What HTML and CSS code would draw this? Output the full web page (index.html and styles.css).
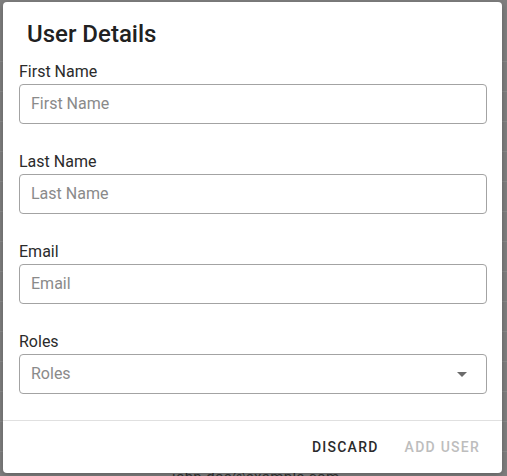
FILE: index.html
```html
<!DOCTYPE html>
<html>
<head>
<meta charset="utf-8">
<link rel="stylesheet" href="styles.css">
</head>
<body>
<div class="page">
  <div class="rows">
    <div class="row"></div><div class="row"></div><div class="row"></div><div class="row"></div>
    <div class="row"></div><div class="row"></div><div class="row"></div><div class="row"></div>
    <div class="row"></div><div class="row"></div><div class="row"></div><div class="row"></div>
    <div class="row"></div><div class="row"></div>
  </div>
  <div class="behind-text">john.doe@example.com</div>
</div>
<div class="dialog">
  <h2 class="title">User Details</h2>
  <div class="content">
    <div class="field">
      <label class="label">First Name</label>
      <div class="input"><span class="placeholder">First Name</span></div>
    </div>
    <div class="field">
      <label class="label">Last Name</label>
      <div class="input"><span class="placeholder">Last Name</span></div>
    </div>
    <div class="field">
      <label class="label">Email</label>
      <div class="input"><span class="placeholder">Email</span></div>
    </div>
    <div class="field">
      <label class="label">Roles</label>
      <div class="input select"><span class="placeholder">Roles</span>
        <svg class="arrow" viewBox="0 0 24 24" width="24" height="24"><path d="M7 10l5 5 5-5z"/></svg>
      </div>
    </div>
  </div>
  <div class="actions">
    <button class="btn">DISCARD</button>
    <button class="btn disabled">ADD USER</button>
  </div>
</div>
</body>
</html>
```
FILE: styles.css
```css
html, body {
  margin: 0;
  padding: 0;
  width: 507px;
  height: 476px;
  overflow: hidden;
  background: #7f7f7f;
  font-family: Roboto, "Liberation Sans", sans-serif;
}
.page {
  position: relative;
  height: 476px;
}
.rows {
  padding-top: 32px;
}
.row {
  height: 29px;
  border-bottom: 1px solid #8b8b8b;
}
.behind-text {
  position: absolute;
  left: 172px;
  top: 468px;
  font-size: 15px;
  color: #333;
  letter-spacing: 0.3px;
}
.dialog {
  position: absolute;
  top: 2px;
  left: 3px;
  width: 499px;
  height: 471px;
  background: #fff;
  border-radius: 4px;
  box-shadow: 0 2px 6px rgba(0,0,0,0.25);
  display: flex;
  flex-direction: column;
  box-sizing: border-box;
}
.title {
  margin: 0;
  padding: 16px 24px 12px;
  font-size: 24px;
  font-weight: 500;
  line-height: 32px;
  color: #212121;
}
.content {
  padding: 0 15px 26px 16px;
  display: flex;
  flex-direction: column;
  gap: 28px;
  border-bottom: 1px solid #e0e0e0;
}
.field {
  display: flex;
  flex-direction: column;
  gap: 3px;
}
.label {
  font-size: 16px;
  line-height: 19px;
  color: #2b2b2b;
}
.input {
  height: 40px;
  box-sizing: border-box;
  border: 1px solid #a3a3a3;
  border-radius: 4px;
  display: flex;
  align-items: center;
  padding: 0 12px 1px 11px;
}
.placeholder {
  font-size: 16px;
  color: #8a8a8a;
  flex: 1;
}
.arrow {
  fill: #6b6b6b;
  margin-top: 1px;
}
.actions {
  flex: 1;
  display: flex;
  justify-content: flex-end;
  align-items: center;
  gap: 10px;
  padding: 0 14px 0 16px;
}
.btn {
  font-family: Roboto, "Liberation Sans", sans-serif;
  font-size: 14px;
  font-weight: 500;
  letter-spacing: 1.25px;
  background: none;
  border: none;
  padding: 6px 8px;
  line-height: 24px;
  color: #2b2b2b;
  min-width: 64px;
}
.btn.disabled {
  color: #bdbdbd;
}
```
